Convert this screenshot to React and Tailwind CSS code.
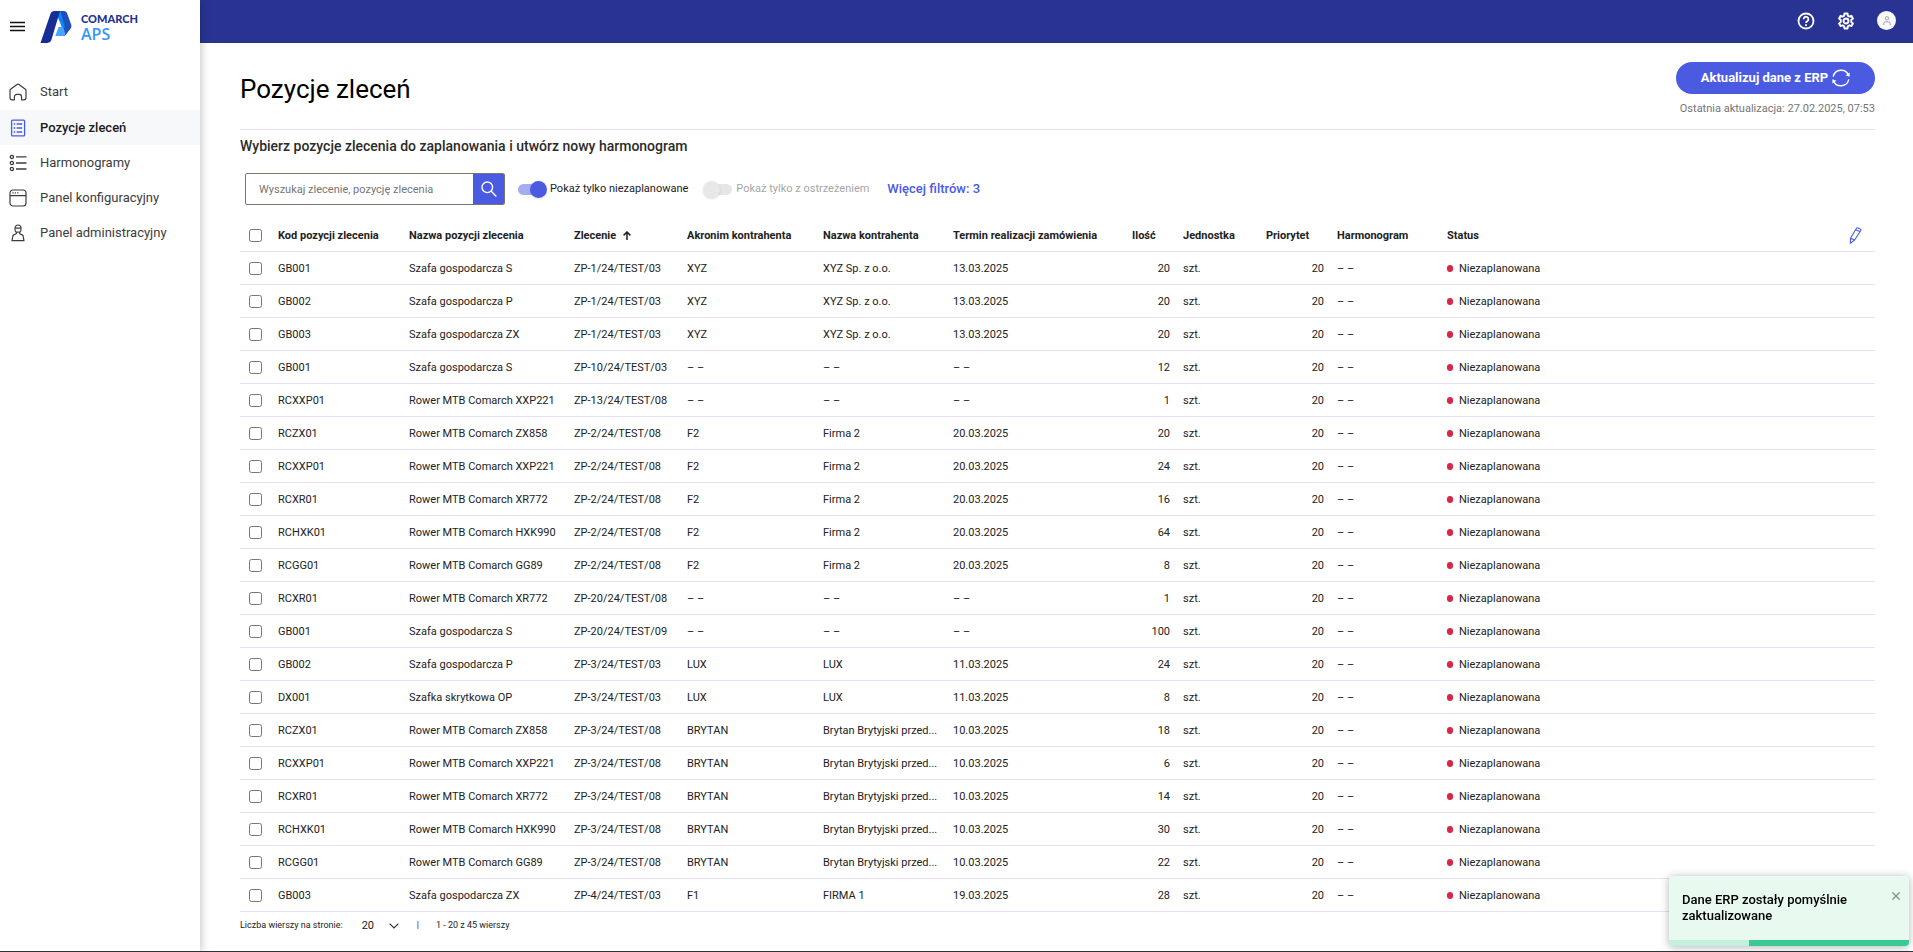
import { useState } from 'react';

const menu = [
  { label: 'Start', icon: HomeIcon },
  { label: 'Pozycje zleceń', icon: OrdersIcon, active: true },
  { label: 'Harmonogramy', icon: SchedulesIcon },
  { label: 'Panel konfiguracyjny', icon: ConfigIcon },
  { label: 'Panel administracyjny', icon: AdminIcon },
];

const EMPTY = '– –';
const BRYTAN = 'Brytan Brytyjski przed...';

// code, name, order, acronym, contractor, due date, quantity
const rows = [
  ['GB001', 'Szafa gospodarcza S', 'ZP-1/24/TEST/03', 'XYZ', 'XYZ Sp. z o.o.', '13.03.2025', 20],
  ['GB002', 'Szafa gospodarcza P', 'ZP-1/24/TEST/03', 'XYZ', 'XYZ Sp. z o.o.', '13.03.2025', 20],
  ['GB003', 'Szafa gospodarcza ZX', 'ZP-1/24/TEST/03', 'XYZ', 'XYZ Sp. z o.o.', '13.03.2025', 20],
  ['GB001', 'Szafa gospodarcza S', 'ZP-10/24/TEST/03', EMPTY, EMPTY, EMPTY, 12],
  ['RCXXP01', 'Rower MTB Comarch XXP221', 'ZP-13/24/TEST/08', EMPTY, EMPTY, EMPTY, 1],
  ['RCZX01', 'Rower MTB Comarch ZX858', 'ZP-2/24/TEST/08', 'F2', 'Firma 2', '20.03.2025', 20],
  ['RCXXP01', 'Rower MTB Comarch XXP221', 'ZP-2/24/TEST/08', 'F2', 'Firma 2', '20.03.2025', 24],
  ['RCXR01', 'Rower MTB Comarch XR772', 'ZP-2/24/TEST/08', 'F2', 'Firma 2', '20.03.2025', 16],
  ['RCHXK01', 'Rower MTB Comarch HXK990', 'ZP-2/24/TEST/08', 'F2', 'Firma 2', '20.03.2025', 64],
  ['RCGG01', 'Rower MTB Comarch GG89', 'ZP-2/24/TEST/08', 'F2', 'Firma 2', '20.03.2025', 8],
  ['RCXR01', 'Rower MTB Comarch XR772', 'ZP-20/24/TEST/08', EMPTY, EMPTY, EMPTY, 1],
  ['GB001', 'Szafa gospodarcza S', 'ZP-20/24/TEST/09', EMPTY, EMPTY, EMPTY, 100],
  ['GB002', 'Szafa gospodarcza P', 'ZP-3/24/TEST/03', 'LUX', 'LUX', '11.03.2025', 24],
  ['DX001', 'Szafka skrytkowa OP', 'ZP-3/24/TEST/03', 'LUX', 'LUX', '11.03.2025', 8],
  ['RCZX01', 'Rower MTB Comarch ZX858', 'ZP-3/24/TEST/08', 'BRYTAN', BRYTAN, '10.03.2025', 18],
  ['RCXXP01', 'Rower MTB Comarch XXP221', 'ZP-3/24/TEST/08', 'BRYTAN', BRYTAN, '10.03.2025', 6],
  ['RCXR01', 'Rower MTB Comarch XR772', 'ZP-3/24/TEST/08', 'BRYTAN', BRYTAN, '10.03.2025', 14],
  ['RCHXK01', 'Rower MTB Comarch HXK990', 'ZP-3/24/TEST/08', 'BRYTAN', BRYTAN, '10.03.2025', 30],
  ['RCGG01', 'Rower MTB Comarch GG89', 'ZP-3/24/TEST/08', 'BRYTAN', BRYTAN, '10.03.2025', 22],
  ['GB003', 'Szafa gospodarcza ZX', 'ZP-4/24/TEST/03', 'F1', 'FIRMA 1', '19.03.2025', 28],
];

function HomeIcon() {
  return (
    <svg width="18" height="18" viewBox="0 0 18 18" fill="none" stroke="currentColor" strokeWidth="1.2" strokeLinejoin="round">
      <path d="M1 7.600Q1 6.800 1.600 6.300L8 1.400Q9 .7 10 1.400l6.400 4.900q.6.500.6 1.300v7.200a2 2 0 0 1-2 2h-2.400V14a2.600 2.600 0 0 0-2.600-2.600H8A2.600 2.600 0 0 0 5.400 14v2.800H3a2 2 0 0 1-2-2z" />
    </svg>
  );
}

function OrdersIcon() {
  return (
    <svg width="18" height="18" viewBox="0 0 18 18" fill="none" stroke="#4a5be2" strokeWidth="1.3">
      <rect x="2.6" y="1.1" width="13" height="15.8" rx="1" />
      <path d="M7.6 5h5.6M7.6 9h5.6M7.6 13h5.6M4.6 5h1.6M4.6 9h1.6M4.6 13h1.6" />
    </svg>
  );
}

function SchedulesIcon() {
  return (
    <svg width="18" height="18" viewBox="0 0 18 18" fill="none" stroke="currentColor" strokeWidth="1.3">
      <circle cx="2.9" cy="2.9" r="1.6" />
      <circle cx="2.9" cy="9" r="1.6" />
      <circle cx="2.9" cy="15" r="1.6" />
      <path d="M7 2.9h10.5M7 9h10.5M7 15h10.5" />
    </svg>
  );
}

function ConfigIcon() {
  return (
    <svg width="18" height="18" viewBox="0 0 18 18" fill="none" stroke="currentColor" strokeWidth="1.2">
      <rect x="1" y="1" width="16" height="16" rx="3" />
      <path d="M1 6.6h16M3.4 3.8h1.2M5.8 3.8H7M8.2 3.8h1.2" />
    </svg>
  );
}

function AdminIcon() {
  return (
    <svg width="18" height="18" viewBox="0 0 18 18" fill="none" stroke="currentColor" strokeWidth="1.2" strokeLinejoin="round">
      <path d="M6 5.200V4a3 3 0 0 1 6 0v1.200a3.400 3.400 0 0 1-1.300 3.200v1.400l2.500 1.100a1.600 1.600 0 0 1 .9 1.100l.9 4.700H3l.9-4.700a1.600 1.600 0 0 1 .9-1.100l2.500-1.100V8.400A3.400 3.400 0 0 1 6 5.200z" />
      <path d="M6.200 4.200h5.600M7.300 8.200h3.400" />
    </svg>
  );
}

function Logo() {
  return (
    <div className="flex items-center gap-[9px]">
      <svg width="32" height="32" viewBox="0 0 32 32">
        <path d="M14.500 0H24a3.500 3.500 0 0 1 3 2L31.300 14a4 4 0 0 1-.6 3.500L25.500 24a3 3 0 0 1-2.300 1l-2-8z" fill="#1c50bd" />
        <path d="M16 0h4.500l4.300 16-1.300 2-5.500-9z" fill="#1183f2" />
        <path d="M17.500 5.500 21.800 16h-7.500z" fill="#fff" />
        <path d="M18.600 16h3.200a2 2 0 0 1 1.800 1.200l1.800 6-1.200 1.300a1.500 1.500 0 0 1-1 .5h-7.900z" fill="#4aa5ff" />
        <path d="M14.500 0H20L11.300 29.300A4 4 0 0 1 7.500 32H.5L10.400 3A4.300 4.300 0 0 1 14.500 0z" fill="#152d96" />
      </svg>
      <div>
        <div className="font-[Lato,sans-serif] text-[11px] leading-[14px] font-black text-[#23338f]">COMARCH</div>
        <div className="font-['Open_Sans',sans-serif] text-[16px] leading-[17px] font-semibold text-[#3497f8]">APS</div>
      </div>
    </div>
  );
}

function Switch({ id, label, checked, onChange, disabled }) {
  return (
    <div className="flex items-center gap-1">
      <input
        id={id}
        type="checkbox"
        role="switch"
        checked={checked}
        onChange={onChange}
        disabled={disabled}
        className="relative h-[11px] w-7 appearance-none rounded-full bg-[#e6e6e6] before:absolute before:-top-[3px] before:-left-px before:size-[17px] before:rounded-full before:bg-[#e8e8e8] before:shadow-sm checked:bg-[#a4adf0] checked:before:left-3 checked:before:bg-[#4a5be2]"
      />
      <label htmlFor={id} className={disabled ? 'text-[11px] text-[#a6a6a6]' : 'text-[11px] text-[#222]'}>
        {label}
      </label>
    </div>
  );
}

function Checkbox({ label }) {
  return <input type="checkbox" aria-label={label} className="mx-[9px] block size-[13px]" />;
}

function OrdersTable() {
  return (
    <table className="w-full table-fixed border-collapse text-left text-[11px] leading-4 text-[#222] [&_td]:truncate [&_td]:pt-[2px] [&_td]:pl-[13px] [&_td:first-child]:pl-0 [&_th]:pt-[3px] [&_th]:pl-[13px] [&_th:first-child]:pl-0">
      <colgroup>
        <col className="w-[25px]" />
        <col className="w-[131px]" />
        <col className="w-[165px]" />
        <col className="w-[113px]" />
        <col className="w-[136px]" />
        <col className="w-[130px]" />
        <col className="w-[179px]" />
        <col className="w-[51px]" />
        <col className="w-[83px]" />
        <col className="w-[71px]" />
        <col className="w-[110px]" />
        <col />
        <col className="w-[39px]" />
      </colgroup>
      <thead>
        <tr className="h-[33px] border-b border-[#e1e1f7] whitespace-nowrap">
          <th><Checkbox label="Zaznacz wszystkie" /></th>
          <th>Kod pozycji zlecenia</th>
          <th>Nazwa pozycji zlecenia</th>
          <th aria-sort="ascending">
            <span className="flex items-center gap-[7px]">
              Zlecenie
              <svg width="8" height="9" viewBox="0 0 8 9" fill="none" stroke="#222" strokeWidth="1.500">
                <path d="M4 9V1M.6 4.400 4 1l3.400 3.400" />
              </svg>
            </span>
          </th>
          <th>Akronim kontrahenta</th>
          <th>Nazwa kontrahenta</th>
          <th>Termin realizacji zamówienia</th>
          <th>Ilość</th>
          <th>Jednostka</th>
          <th>Priorytet</th>
          <th>Harmonogram</th>
          <th>Status</th>
          <th>
            <button type="button" aria-label="Edytuj kolumny" className="block">
              <svg width="14" height="17" viewBox="0 0 14 17" fill="none" stroke="#4a5be2" strokeWidth="1.100" strokeLinejoin="round">
                <path d="M1.500 11.300 7.300 1.500a1.300 1.300 0 0 1 1.600-.6l2.300 1a1.200 1.200 0 0 1 .6 1.600L5.600 13 1.300 16.200zM1.500 11.300 5.600 13M6.600 2.700l4.300 1.900" />
              </svg>
            </button>
          </th>
        </tr>
      </thead>
      <tbody>
        {rows.map(([code, name, order, acronym, contractor, date, qty], i) => (
          <tr key={i} className="h-[33px] border-b border-[#e1e1f7]">
            <td><Checkbox label={`Zaznacz ${code}`} /></td>
            <td>{code}</td>
            <td>{name}</td>
            <td>{order}</td>
            <td>{acronym}</td>
            <td>{contractor}</td>
            <td>{date}</td>
            <td className="text-right">{qty}</td>
            <td>szt.</td>
            <td className="text-right">20</td>
            <td>{EMPTY}</td>
            <td>
              <span className="flex items-center gap-[6px]">
                <span className="h-[7px] w-[6px] rounded-full bg-[#dc2446]" />
                Niezaplanowana
              </span>
            </td>
            <td></td>
          </tr>
        ))}
      </tbody>
    </table>
  );
}

export default function App() {
  const [onlyUnplanned, setOnlyUnplanned] = useState(true);
  const [showToast, setShowToast] = useState(true);

  return (
    <div className="flex min-h-screen bg-white font-[Roboto,sans-serif]">
      <aside className="z-10 w-[200px] shrink-0 bg-white shadow-[2px_0_8px_rgba(0,0,0,0.2)]">
        <div className="flex h-[43px] items-center gap-[15px] pt-[11px] pl-[10px]">
          <button type="button" aria-label="Menu">
            <svg width="15" height="12" viewBox="0 0 15 12" stroke="#111" strokeWidth="1.500">
              <path d="M0 1.500h15M0 5.500h15M0 9.500h15" />
            </svg>
          </button>
          <Logo />
        </div>
        <nav className="mt-[31px]">
          {menu.map(({ label, icon: Icon, active }) => (
            <a
              key={label}
              href="#"
              aria-current={active ? 'page' : undefined}
              className={
                active
                  ? 'mt-px flex h-[35px] items-center gap-[13px] bg-[#f7f8fa] pl-[9px] text-[13px] font-medium text-[#1b1b1b]'
                  : 'flex h-[35px] items-center gap-[13px] pl-[9px] text-[13px] text-[#3c3c3c]'
              }
            >
              <Icon />
              {label}
            </a>
          ))}
        </nav>
      </aside>

      <div className="min-w-0 flex-1">
        <header className="flex h-[43px] items-center justify-end gap-[22px] bg-[#293492] pr-[17px] pb-[2px]">
          <button type="button" aria-label="Pomoc">
            <svg width="18" height="18" viewBox="0 0 18 18" fill="none" stroke="#fff" strokeWidth="1.800">
              <circle cx="9" cy="9" r="7.500" />
              <path d="M6.600 7.200a2.400 2.400 0 1 1 3.800 1.900c-.9.600-1.400 1-1.400 2" />
              <path d="M9 12.300v1.700" />
            </svg>
          </button>
          <button type="button" aria-label="Ustawienia">
            <svg width="18" height="18" viewBox="0 0 24 24" fill="none" stroke="#fff" strokeWidth="2.600" strokeLinejoin="round">
              <path d="m10 2-.5 3-2 1.100-2.700-1-2 3.600L5 10.600v2.700l-2.200 2 2 3.500 2.700-1 2 1.200.5 3h4l.5-3 2-1.200 2.700 1 2-3.500-2.200-2v-2.700l2.200-1.900-2-3.600-2.700 1-2-1.100-.5-3z" />
              <circle cx="12" cy="12" r="3.300" />
            </svg>
          </button>
          <button type="button" aria-label="Konto" className="flex size-[19px] items-center justify-center rounded-full bg-[#f7f8fa]">
            <svg width="8" height="9" viewBox="0 0 8 9" fill="none" stroke="#8f8f8f" strokeWidth=".8">
              <circle cx="4" cy="2.300" r="1.700" />
              <path d="M.8 9V7.500A1.700 1.700 0 0 1 2.500 5.800h3a1.700 1.700 0 0 1 1.700 1.700V9" />
            </svg>
          </button>
        </header>

        <main className="pr-[38px] pl-10">
          <div className="flex h-[87px] items-start justify-between border-b border-[#e1e1f7] pt-[19px]">
            <h1 className="pt-px text-[26px] leading-[52px] text-black">Pozycje zleceń</h1>
            <div className="flex flex-col items-end">
              <button type="button" className="flex h-8 w-[199px] items-center justify-center gap-1 rounded-full bg-[#4a5be2] text-[13px] font-bold text-white">
                Aktualizuj dane z ERP
                <svg width="18" height="18" viewBox="0 0 18 18" fill="none" stroke="#fff" strokeWidth="1.400">
                  <path d="M1.200 7.600A8 8 0 0 1 16.600 6.600M16.800 10.400A8 8 0 0 1 1.400 11.400" />
                  <path d="M17.600 3.600v4.200l-4-1.600zM.4 14.400v-4.200l4 1.600z" fill="#fff" stroke="none" />
                </svg>
              </button>
              <p className="mt-[7px] text-[11px] leading-4 text-[#757575]">Ostatnia aktualizacja: 27.02.2025, 07:53</p>
            </div>
          </div>

          <h2 className="mt-[6px] text-sm font-medium text-[#2b2b2b]">
            Wybierz pozycje zlecenia do zaplanowania i utwórz nowy harmonogram
          </h2>

          <div className="mt-[17px] flex items-center pl-[5px]">
            <form className="flex h-8 w-[260px] overflow-hidden rounded-[2px] border border-[#77776a]" onSubmit={e => e.preventDefault()}>
              <input
                type="text"
                aria-label="Wyszukaj"
                placeholder="Wyszukaj zlecenie, pozycję zlecenia"
                className="min-w-0 flex-1 pt-[3px] pl-[13px] text-[11px] placeholder:text-[#757575]"
              />
              <button type="submit" aria-label="Szukaj" className="flex w-[31px] items-center justify-center bg-[#4a5be2]">
                <svg width="16" height="16" viewBox="0 0 16 16" fill="none" stroke="#fff" strokeWidth="1.400">
                  <circle cx="6.300" cy="6.300" r="5.300" />
                  <path d="m10.200 10.200 5.200 5.200" />
                </svg>
              </button>
            </form>
            <div className="ml-[13px] flex items-center gap-4">
              <Switch
                id="only-unplanned"
                label="Pokaż tylko niezaplanowane"
                checked={onlyUnplanned}
                onChange={e => setOnlyUnplanned(e.target.checked)}
              />
              <Switch id="only-warnings" label="Pokaż tylko z ostrzeżeniem" checked={false} disabled />
            </div>
            <a href="#" className="ml-[18px] text-[13px] font-medium text-[#4a5be2]">Więcej filtrów: 3</a>
          </div>

          <div className="mt-[13px]">
            <OrdersTable />
          </div>

          <div className="flex h-[28px] items-center text-[9px] text-[#222]">
            <label htmlFor="page-size">Liczba wierszy na stronie:</label>
            <div className="ml-[19px] grid items-center">
              <select id="page-size" defaultValue="20" className="col-start-1 row-start-1 w-[37px] appearance-none pt-px text-[11px]">
                <option>20</option>
                <option>50</option>
                <option>100</option>
              </select>
              <svg className="pointer-events-none col-start-1 row-start-1 justify-self-end" width="10" height="6" viewBox="0 0 10 6" fill="none" stroke="#333" strokeWidth="1.200">
                <path d="m.6.6 4.400 4.400L9.400.6" />
              </svg>
            </div>
            <span className="ml-[18px]">|</span>
            <span className="ml-[17px]">1 - 20 z 45 wierszy</span>
          </div>
        </main>
      </div>

      {showToast && (
        <div role="status" className="fixed right-1 bottom-[6px] z-20 w-60 overflow-hidden rounded-[4px] bg-[#e8faf0] shadow-[0_1px_8px_rgba(0,0,0,0.3)]">
          <div className="flex h-16 items-start justify-between pt-4 pr-[9px] pl-[13px]">
            <p className="w-[180px] text-[13px] leading-4 font-medium text-black">Dane ERP zostały pomyślnie zaktualizowane</p>
            <button type="button" aria-label="Zamknij" onClick={() => setShowToast(false)}>
              <svg width="8" height="8" viewBox="0 0 8 8" stroke="#8a9a92" strokeWidth="1.500">
                <path d="m.4.4 7.200 7.200M7.600.4.400 7.600" />
              </svg>
            </button>
          </div>
          <div className="h-[6px] bg-[#c3efdf]">
            <div className="ml-auto h-full w-2/3 bg-[#38cb94]"></div>
          </div>
        </div>
      )}

      <div className="fixed inset-x-0 bottom-0 z-20 h-px bg-[#2a323a]"></div>
    </div>
  );
}
